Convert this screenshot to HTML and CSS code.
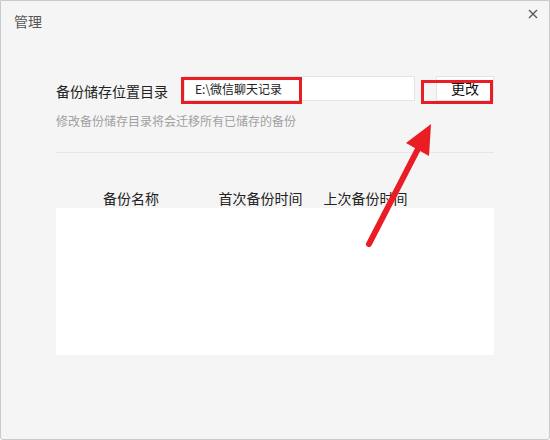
FILE: index.html
```html
<!DOCTYPE html>
<html lang="zh-CN">
<head>
    <meta charset="UTF-8">
    <title>管理</title>
    <link rel="stylesheet" href="styles.css">
</head>
<body>
    <div class="dialog">
        <div class="title-bar">
            <span class="title">管理</span>
            <button class="close" type="button" aria-label="关闭">
                <svg width="10" height="10" viewBox="0 0 10 10">
                    <path d="M1 1 L9 9 M9 1 L1 9" stroke="#555" stroke-width="1.3" fill="none"/>
                </svg>
            </button>
        </div>

        <div class="content">
            <div class="path-row">
                <span class="label">备份储存位置目录</span>
                <div class="path-input">E:\微信聊天记录</div>
                <button class="change-btn" type="button">更改</button>
            </div>
            <p class="hint">修改备份储存目录将会迁移所有已储存的备份</p>

            <div class="divider"></div>

            <div class="table-head">
                <span>备份名称</span>
                <span>首次备份时间</span>
                <span>上次备份时间</span>
            </div>
            <div class="table-body"></div>
        </div>

        <!-- annotation marks -->
        <div class="mark mark-path"></div>
        <div class="mark mark-btn"></div>
        <svg class="arrow" width="550" height="440" viewBox="0 0 550 440">
            <line x1="369" y1="244" x2="421" y2="143" stroke="#ea1c24" stroke-width="6" stroke-linecap="round"/>
            <polygon points="431,124 406,143 429,156" fill="#ea1c24"/>
        </svg>
    </div>
</body>
</html>
```

FILE: styles.css
```css
* {
    margin: 0;
    padding: 0;
    box-sizing: border-box;
}

body {
    font-family: "Noto Sans CJK SC", "Noto Sans", sans-serif;
    color: #333;
    background: #fff;
}

.dialog {
    position: relative;
    width: 550px;
    height: 440px;
    background: #f5f5f5;
    border: 1px solid #cacaca;
    border-radius: 0 0 3px 3px;
}

.title-bar {
    display: flex;
    justify-content: space-between;
    align-items: flex-start;
    padding: 10px 11px 0 13px;
    height: 31px;
}

.title {
    font-size: 14px;
    line-height: 20px;
    color: #555;
}

.close {
    border: none;
    background: none;
    width: 10px;
    height: 10px;
    margin-top: -2px;
    display: flex;
}

.content {
    padding: 0 55px;
}

.path-row {
    display: flex;
    align-items: flex-start;
    margin-top: 44px;
}

.label {
    font-size: 14px;
    line-height: 20px;
    margin-top: 5px;
    width: 112px;
    color: #222;
}

.path-input {
    margin-left: 16px;
    width: 231px;
    height: 25px;
    background: #fff;
    border: 1px solid #e4e4e4;
    font-size: 12px;
    line-height: 23px;
    padding-left: 10px;
    color: #222;
}

.change-btn {
    margin-left: 21px;
    width: 58px;
    height: 25px;
    background: #fff;
    border: 1px solid #e4e4e4;
    font-family: inherit;
    font-size: 14px;
    line-height: 23px;
    color: #111;
}

.hint {
    margin-top: 11px;
    font-size: 12px;
    line-height: 18px;
    color: #a0a0a0;
}

.divider {
    margin-top: 22px;
    height: 1px;
    background: #e6e6e6;
}

.table-head {
    display: grid;
    grid-template-columns: 150px 109px 101px;
    margin-top: 35px;
    font-size: 14px;
    line-height: 20px;
    text-align: center;
    color: #222;
}

.table-body {
    height: 147px;
    background: #fff;
}

.mark {
    position: absolute;
    border: 3px solid #ea1c24;
}

.mark-path {
    left: 180px;
    top: 76px;
    width: 121px;
    height: 27px;
}

.mark-btn {
    left: 420px;
    top: 79px;
    width: 72px;
    height: 24px;
}

.arrow {
    position: absolute;
    left: -1px;
    top: -1px;
    pointer-events: none;
}
```
